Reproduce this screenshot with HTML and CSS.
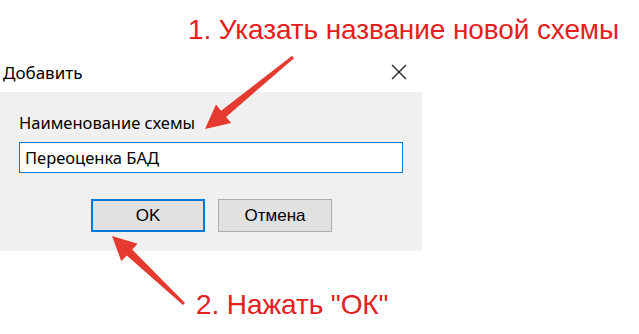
FILE: index.html
```html
<!DOCTYPE html>
<html lang="ru">
<head>
    <meta charset="UTF-8">
    <title>Добавить</title>
    <link rel="stylesheet" href="styles.css">
</head>
<body>
    <div class="page">
        <p class="note note-top">1. Указать название новой схемы</p>

        <div class="dialog">
            <div class="titlebar">
                <span class="title">Добавить</span>
                <svg class="close" width="16" height="16" viewBox="0 0 16 16">
                    <path d="M1 1 L15 15 M15 1 L1 15" stroke="#222" stroke-width="1.4" fill="none"/>
                </svg>
            </div>
            <div class="dialog-body">
                <label class="field-label" for="name">Наименование схемы</label>
                <input class="field" id="name" type="text" value="Переоценка БАД">
                <div class="buttons">
                    <button class="btn btn-default">OK</button>
                    <button class="btn">Отмена</button>
                </div>
            </div>
        </div>

        <p class="note note-bottom">2. Нажать "ОК"</p>

        <!-- arrows drawn over the screenshot -->
        <svg class="arrows" width="639" height="334" viewBox="0 0 639 334">
            <polygon points="294,58.2 226.1,116.9 231.2,123.1 205,129 216,104.5 221.1,110.7 292.1,55.8" />
            <polygon points="185,302.9 132.2,249.6 137.7,243.8 112,236 121.3,261.2 126.8,255.4 183,305.1" />
        </svg>
    </div>
</body>
</html>
```

FILE: styles.css
```css
body {
    margin: 0;
    background: #fff;
    font-family: 'Liberation Sans', Arial, sans-serif;
}

.page {
    position: relative;
    width: 639px;
    height: 334px;
    overflow: hidden;
}

/* Red notes */
.note {
    margin: 0;
    font-size: 28px;
    line-height: 32px;
    color: #e5201c;
    white-space: nowrap;
    letter-spacing: -0.1px;
}

.note-top {
    padding: 14px 0 0 188px;
}

.note-bottom {
    padding: 38px 0 0 196px;
}

/* Dialog */
.dialog {
    width: 422px;
    margin-top: 6px;
}

.titlebar {
    display: flex;
    align-items: center;
    justify-content: space-between;
    height: 40px;
    padding: 0 15px 0 3px;
}

.title {
    font-family: 'Noto Sans', sans-serif;
    font-size: 17px;
    color: #000;
}

.dialog-body {
    background: #f0f0f0;
    padding: 20px 19px 19px 19px;
    display: flex;
    flex-direction: column;
}

.field-label {
    font-family: 'Noto Sans', sans-serif;
    font-size: 16.5px;
    line-height: 21px;
    color: #000;
    margin-bottom: 9px;
}

.field {
    width: 384px;
    height: 31px;
    box-sizing: border-box;
    border: 1px solid #0078d7;
    background: #fff;
    padding: 0 5px;
    font-family: 'Noto Sans', sans-serif;
    font-size: 16.5px;
    color: #000;
    outline: none;
}

.buttons {
    display: flex;
    gap: 13px;
    margin: 26px 0 0 72px;
}

.btn {
    width: 114px;
    height: 33px;
    box-sizing: border-box;
    background: #e1e1e1;
    border: 1px solid #adadad;
    font-family: 'Liberation Sans', sans-serif;
    font-size: 17px;
    color: #000;
    padding: 0;
}

.btn-default {
    border: 2px solid #0078d7;
}

.arrows {
    position: absolute;
    left: 0;
    top: 0;
    fill: #e53a30;
}
```
